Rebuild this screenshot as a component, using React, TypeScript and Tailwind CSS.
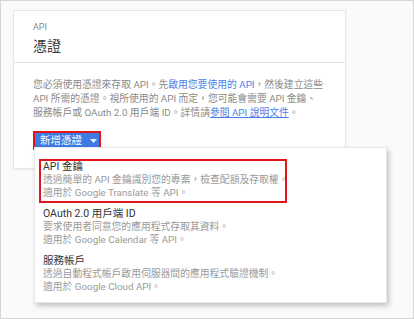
import React from "react";

const font = { fontFamily: 'Roboto, "Noto Sans CJK TC", "Liberation Sans", sans-serif' };

function Item({ title, lines }: { title: string; lines: React.ReactNode[] }) {
  return (
    <div className="flex flex-col">
      <div className="text-[10.5px] leading-[13px] text-[#333]">{title}</div>
      {lines.map((l, i) => (
        <div key={i} className="text-[9.8px] leading-[13px] text-[#9a9a9a] whitespace-nowrap">
          {l}
        </div>
      ))}
    </div>
  );
}

export default function App() {
  return (
    <div
      style={font}
      className="relative w-[414px] h-[319px] overflow-hidden border border-[#d6d6d6] bg-[#fafafa] pl-[12px] pt-[9px]"
    >
      <div className="w-[333px] h-[159px] bg-white border border-[#e6e6e6] shadow-[0_1px_2px_rgba(0,0,0,0.06)]">
        <div className="px-[19px] pt-[10px] pb-[7px] border-b border-[#e3e3e3]">
          <div className="text-[9px] leading-[12px] text-[#8a8a8a]">API</div>
          <div className="mt-[4px] text-[14px] leading-[18px] text-[#333]">憑證</div>
        </div>
        <div className="px-[19px] pt-[15px]">
          <div className="text-[9.8px] leading-[14px] text-[#8a8a8a] whitespace-nowrap">
            <div>
              您必須使用憑證來存取 API。先<span className="text-[#4a7fe8]">啟用您要使用的 API</span>，然後建立這些
            </div>
            <div>API 所需的憑證。視所使用的 API 而定，您可能會需要 API 金鑰、</div>
            <div>
              服務帳戶或 OAuth 2.0 用戶端 ID。詳情請<span className="text-[#4a7fe8] underline">參閱 API 說明文件</span>。
            </div>
          </div>
          <div className="relative mt-[11px]">
            <button className="flex items-center gap-[8px] h-[19px] w-[68px] pl-[5px] border-2 border-[#e0161b] bg-[#3f7be4] text-white text-[10.5px] leading-[13px]">
              <span>新增憑證</span>
              <svg width="7" height="4" viewBox="0 0 7 4">
                <path d="M0 0 L7 0 L3.5 4 Z" fill="#e8eefc" />
              </svg>
            </button>
            <div className="absolute left-[1px] top-[16px] w-[353px] h-[156px] bg-white border border-[#e8e8e8] shadow-[2px_3px_5px_rgba(0,0,0,0.22)] pl-[8px] pt-[12px] flex flex-col gap-[8px]">
              <Item
                title="API 金鑰"
                lines={["透過簡單的 API 金鑰識別您的專案，檢查配額及存取權。", "適用於 Google Translate 等 API。"]}
              />
              <Item
                title="OAuth 2.0 用戶端 ID"
                lines={["要求使用者同意您的應用程式存取其資料。", "適用於 Google Calendar 等 API。"]}
              />
              <Item
                title="服務帳戶"
                lines={["透過自動程式帳戶啟用伺服器間的應用程式驗證機制。", "適用於 Google Cloud API。"]}
              />
              <div className="absolute left-[4px] top-[11px] w-[248px] h-[44px] border-2 border-[#e0161b]" />
            </div>
          </div>
        </div>
      </div>
    </div>
  );
}
